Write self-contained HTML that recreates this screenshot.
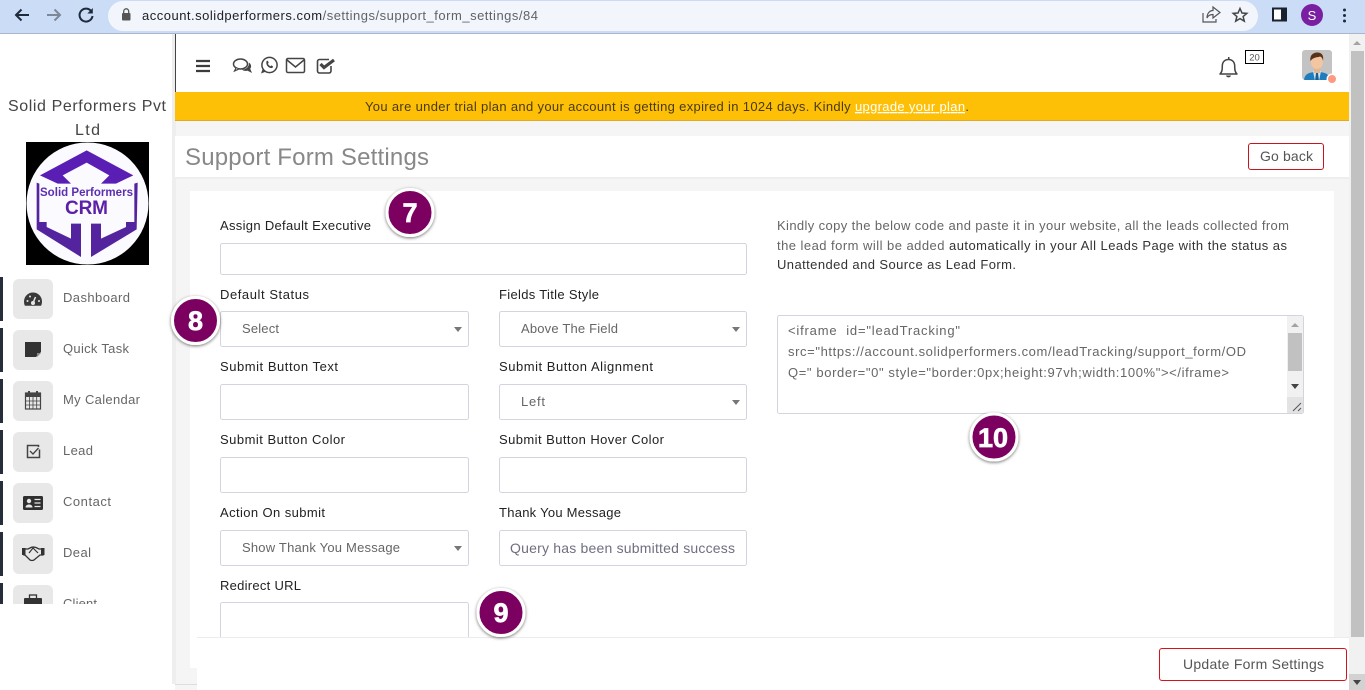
<!DOCTYPE html>
<html><head><meta charset="utf-8"><title>Support Form Settings</title>
<style>
html,body{margin:0;padding:0;width:1365px;height:690px;overflow:hidden;background:#fff}
svg{display:block}
text{font-family:"Liberation Sans",sans-serif;white-space:pre}
.l{font-size:13px;fill:#222}
.s{font-size:13px;fill:#666}
.n{font-size:13px;fill:#666}
.b{fill:#fff;stroke:#d4d4e0;stroke-width:1}
.t{fill:#fff;stroke:#fff;stroke-width:.7;font-weight:bold;font-size:27px;text-anchor:middle}
</style></head><body>
<svg width="1365" height="690" viewBox="0 0 1365 690" xmlns="http://www.w3.org/2000/svg">
<defs>
<filter id="sh" x="-30%" y="-30%" width="160%" height="160%"><feDropShadow dx="0" dy="1" stdDeviation="1.6" flood-color="#000" flood-opacity=".55"/></filter>
<clipPath id="side"><rect x="0" y="270" width="172" height="334"/></clipPath>
<clipPath id="av"><rect x="1302" y="50" width="30" height="30" rx="3"/></clipPath>
</defs>

<!-- page backgrounds -->
<rect x="0" y="34" width="1365" height="656" fill="#fff"/>
<rect x="175" y="120" width="1175" height="570" fill="#f5f5f5"/>
<rect x="172" y="34" width="4" height="650" fill="#eee"/>
<rect x="175" y="34" width="1175" height="58" fill="#fff"/>
<rect x="175" y="34" width="1" height="58" fill="#444"/>

<!-- browser chrome -->
<rect x="0" y="0" width="1365" height="33" fill="#cbdcf6"/>
<rect x="0" y="33" width="1365" height="1" fill="#a9b6cb"/>
<rect x="108" y="1" width="1150" height="30" rx="15" fill="#f2f6fc"/>
<path d="M29 15H16M21.500 9.500 16 15l5.500 5.500" fill="none" stroke="#1f2b3a" stroke-width="2"/>
<path d="M47 15H60M54.500 9.500 60 15l-5.500 5.500" fill="none" stroke="#7d8798" stroke-width="2"/>
<path d="M91.500 11.500A6.500 6.500 0 1 0 92.500 16" fill="none" stroke="#1f2b3a" stroke-width="2"/>
<path d="M92.800 8v5.500h-5.500z" fill="#1f2b3a"/>
<rect x="122" y="13" width="8.500" height="7.500" rx="1" fill="#555"/>
<path d="M123.700 13v-1.700a2.500 2.500 0 0 1 5 0V13" fill="none" stroke="#555" stroke-width="1.300"/>
<text x="142" y="20" font-size="13" fill="#5f6368" textLength="396" lengthAdjust="spacing"><tspan fill="#202124">account.solidperformers.com</tspan>/settings/support_form_settings/84</text>
<path d="M1203 13v9h13v-3M1207 18c0-5 3-7.500 6-7.500V7l7 5.500-7 5.500v-3.500c-3 0-5 1-6 3.500z" fill="none" stroke="#555" stroke-width="1.200"/>
<path d="m1240 8.500 2 4.500 4.800.4-3.700 3.100 1.200 4.700-4.300-2.600-4.300 2.600 1.200-4.700-3.700-3.100 4.800-.4z" fill="none" stroke="#444" stroke-width="1.500"/>
<rect x="1273" y="8.500" width="13" height="12" fill="#fff" stroke="#1a2230" stroke-width="2"/>
<rect x="1281" y="8.500" width="6" height="12" fill="#1a2230"/>
<circle cx="1312" cy="15" r="11" fill="#7b1fa2"/>
<text x="1312" y="20" font-size="13" fill="#fff" text-anchor="middle">S</text>
<circle cx="1344.500" cy="10" r="1.500" fill="#1f2b3a"/><circle cx="1344.500" cy="15.500" r="1.500" fill="#1f2b3a"/><circle cx="1344.500" cy="21" r="1.500" fill="#1f2b3a"/>

<!-- top nav icons -->
<path d="M196 61h14M196 66h14M196 71h14" stroke="#3c3c3c" stroke-width="2.200"/>
<ellipse cx="240.500" cy="64" rx="7" ry="5" fill="#fff" stroke="#444" stroke-width="1.500"/>
<path d="M236 68l-1.500 3 4-1.800" fill="#fff" stroke="#444" stroke-width="1.200"/>
<path d="M248.800 62.500c2.500 1.500 3 4.300 1.400 6.300l1.800 4.200-4.600-2.400c-2 .6-4 .2-5.400-1 3.500.2 7.400-2.400 6.800-7.100z" fill="#444"/>
<circle cx="269.500" cy="65" r="7.600" fill="none" stroke="#444" stroke-width="1.500"/>
<path d="M261 73.500l1.900-5.300 3.300 3.300z" fill="#444"/>
<path d="M266.300 61.500c.5-1 1.600-1 1.900 0l.5 1.400-.8.9c.5 1.100 1.300 1.900 2.500 2.400l.9-.8 1.400.7c.7.6 0 1.900-1.300 2-3.200 0-5.900-3.800-4.900-6.600z" fill="#444"/>
<rect x="286.500" y="58.500" width="18" height="14" rx="1.500" fill="none" stroke="#444" stroke-width="1.500"/>
<path d="m287 60 8.500 7 8.500-7" fill="none" stroke="#444" stroke-width="1.500"/>
<path d="M331 66v5a2 2 0 0 1-2 2h-9.500a2 2 0 0 1-2-2v-9.500a2 2 0 0 1 2-2h9.500" fill="none" stroke="#444" stroke-width="1.600"/>
<path d="m320.500 64 3.500 3.500L334 60" fill="none" stroke="#444" stroke-width="3.200"/>

<!-- bell + count -->
<path d="M1220 74c2-2 2.300-4 2.300-8 0-4 2.500-6.500 6.200-6.500s6.200 2.500 6.200 6.500c0 4 .3 6 2.300 8z" fill="none" stroke="#444" stroke-width="1.500" stroke-linejoin="round"/>
<path d="M1226 75.500a2.600 2.600 0 0 0 5 0z" fill="#444"/>
<rect x="1228" y="57" width="1.500" height="2.500" fill="#444"/>
<rect x="1245.500" y="50.500" width="18" height="13" fill="#fff" stroke="#000"/>
<text x="1254.500" y="60.500" font-size="9.500" fill="#555" text-anchor="middle">20</text>

<!-- avatar -->
<rect x="1302" y="50" width="30" height="30" rx="3" fill="#c3c3c3"/>
<g clip-path="url(#av)">
<path d="M1304 81c0-7 5-9 13-9s13 2 13 9z" fill="#1f7dbd"/>
<path d="M1313 71h8l-2 10h-4z" fill="#cfe6f2"/>
<path d="M1316 73h2l1 8h-4z" fill="#175f95"/>
<rect x="1314" y="66" width="6" height="7" fill="#e8b48f"/>
<ellipse cx="1317" cy="62" rx="6" ry="7" fill="#f3c6a2"/>
<path d="M1310.500 61c-1-6 3-8.500 7-8.500s6.500 2.500 5.500 8.500c-.5-3-1.500-4-3-4.500-2.500 1-7 .5-9.500 4.500z" fill="#5a3218"/>
</g>
<circle cx="1332" cy="79" r="5.500" fill="#fff"/><circle cx="1332" cy="79" r="4" fill="#ff9a80"/>

<!-- banner -->
<rect x="175" y="92" width="1174" height="28" fill="#fdc006"/>
<rect x="175" y="120" width="1174" height="1" fill="#e0a92a"/>
<text x="365" y="111" font-size="13" fill="#4a3a10" textLength="604" lengthAdjust="spacing">You are under trial plan and your account is getting expired in 1024 days. Kindly <tspan fill="#fff" text-decoration="underline">upgrade your plan</tspan>.</text>

<!-- title bar -->
<rect x="175" y="136" width="1174" height="41" fill="#fff"/>
<rect x="175" y="177" width="1174" height="2" fill="#eee"/>
<text x="185" y="165" font-size="24" fill="#888" textLength="244" lengthAdjust="spacing">Support Form Settings</text>
<rect x="1248.500" y="143.500" width="75" height="26" rx="2.500" fill="#fff" stroke="#c8141c"/>
<text x="1260" y="161" font-size="14" fill="#555" textLength="53" lengthAdjust="spacing">Go back</text>

<!-- card -->
<rect x="190" y="191" width="1144" height="477" fill="#fff"/>
<text class="l" x="220" y="230" textLength="151" lengthAdjust="spacing">Assign Default Executive</text>
<rect class="b" x="220.500" y="243.500" width="526" height="31" rx="2"/>
<text class="l" x="220" y="299" textLength="89" lengthAdjust="spacing">Default Status</text>
<text class="l" x="499" y="299" textLength="100" lengthAdjust="spacing">Fields Title Style</text>
<rect class="b" x="220.500" y="311.500" width="248" height="35" rx="2"/>
<rect class="b" x="499.500" y="311.500" width="247" height="35" rx="2"/>
<text class="s" x="242" y="333" textLength="37" lengthAdjust="spacing">Select</text>
<text class="s" x="521" y="333" textLength="97" lengthAdjust="spacing">Above The Field</text>
<path d="M454 327h8l-4 5zM732 327h8l-4 5z" fill="#777"/>
<text class="l" x="220" y="371" textLength="118" lengthAdjust="spacing">Submit Button Text</text>
<text class="l" x="499" y="371" textLength="154" lengthAdjust="spacing">Submit Button Alignment</text>
<rect class="b" x="220.500" y="384.500" width="248" height="35" rx="2"/>
<rect class="b" x="499.500" y="384.500" width="247" height="35" rx="2"/>
<text class="s" x="521" y="406" textLength="24" lengthAdjust="spacing">Left</text>
<path d="M732 400h8l-4 5z" fill="#777"/>
<text class="l" x="220" y="444" textLength="125" lengthAdjust="spacing">Submit Button Color</text>
<text class="l" x="499" y="444" textLength="165" lengthAdjust="spacing">Submit Button Hover Color</text>
<rect class="b" x="220.500" y="457.500" width="248" height="35" rx="2"/>
<rect class="b" x="499.500" y="457.500" width="247" height="35" rx="2"/>
<text class="l" x="220" y="517" textLength="105" lengthAdjust="spacing">Action On submit</text>
<text class="l" x="499" y="517" textLength="122" lengthAdjust="spacing">Thank You Message</text>
<rect class="b" x="220.500" y="530.500" width="248" height="35" rx="2"/>
<rect class="b" x="499.500" y="530.500" width="247" height="35" rx="2"/>
<text class="s" x="242" y="552" textLength="158" lengthAdjust="spacing">Show Thank You Message</text>
<path d="M454 546h8l-4 5z" fill="#777"/>
<text x="510" y="553" font-size="14" fill="#6f6f80" textLength="225" lengthAdjust="spacing">Query has been submitted success</text>
<text class="l" x="220" y="590" textLength="81" lengthAdjust="spacing">Redirect URL</text>
<rect class="b" x="220.500" y="602.500" width="248" height="50" rx="2"/>

<!-- right column -->
<text class="n" x="777" y="230" textLength="512" lengthAdjust="spacing">Kindly copy the below code and paste it in your website, all the leads collected from</text>
<text class="n" x="777" y="250" textLength="510" lengthAdjust="spacing">the lead form will be added <tspan fill="#333">automatically in your All Leads Page with the status as</tspan></text>
<text x="777" y="269" font-size="13" fill="#333" textLength="239" lengthAdjust="spacing">Unattended and Source as Lead Form.</text>
<rect class="b" x="777.500" y="315.500" width="526" height="98" rx="2"/>
<text class="s" x="788" y="335" textLength="172" lengthAdjust="spacing">&lt;iframe  id="leadTracking"</text>
<text class="s" x="788" y="356" textLength="458" lengthAdjust="spacing">src="https://account.solidperformers.com/leadTracking/support_form/OD</text>
<text class="s" x="788" y="377" textLength="441" lengthAdjust="spacing">Q=" border="0" style="border:0px;height:97vh;width:100%"&gt;&lt;/iframe&gt;</text>
<rect x="1287" y="316" width="16" height="97" fill="#f1f1f1"/>
<rect x="1288" y="333" width="14" height="38" fill="#c1c1c1"/>
<path d="M1291 327h8l-4-4z" fill="#a3a3a3"/>
<path d="M1291 384h8l-4 5z" fill="#444"/>
<rect x="1287" y="397" width="16" height="16" fill="#e3e3e3"/>
<path d="M1293 411l8-8M1298 411l3-3" stroke="#555" stroke-width="1"/>

<!-- bottom bar -->
<rect x="197" y="638" width="1152" height="52" fill="#fff"/>
<rect x="197" y="637" width="1152" height="1" fill="#ececec"/>
<rect x="175" y="684" width="22" height="1" fill="#ddd"/>
<rect x="1159.500" y="648.500" width="187" height="32" rx="2.500" fill="#fff" stroke="#d8121c"/>
<text x="1183" y="669" font-size="14" fill="#555" textLength="141" lengthAdjust="spacing">Update Form Settings</text>

<!-- page scrollbar -->
<rect x="1349" y="34" width="16" height="656" fill="#f1f1f1"/>
<rect x="1351" y="51" width="13" height="586" fill="#c1c1c1"/>
<path d="M1353 45h8l-4-4z" fill="#a3a3a3"/>
<rect x="1349" y="674" width="16" height="16" fill="#d2d2d2"/>
<path d="M1353 680h8l-4 5z" fill="#444"/>

<!-- sidebar -->
<text x="8" y="111" font-size="16" fill="#444" textLength="158" lengthAdjust="spacing">Solid Performers Pvt</text>
<text x="75" y="135" font-size="16" fill="#444" textLength="25" lengthAdjust="spacing">Ltd</text>
<rect x="26" y="142" width="123" height="123" fill="#000"/>
<circle cx="87.500" cy="203.500" r="61" fill="#fbfaff"/>
<g transform="translate(26 142) scale(.33333)">
<path d="M182 25 322 100 270 125H225L250 100 182 62 110 100 135 125H95L42 100z" fill="#5a1eb4"/>
<path d="M32 122 40 125V240H62V255L135 290V245H165V345L32 262z" fill="#54249f"/>
<path d="M335 122 325 125V240H300V255L225 290V245H195V345L332 262z" fill="#54249f"/>
</g>
<text x="40" y="196" font-size="11.500" font-weight="bold" fill="#5b2fb0" textLength="93" lengthAdjust="spacing">Solid Performers</text>
<text x="65" y="214" font-size="19" font-weight="bold" fill="#5b1fa8" textLength="43" lengthAdjust="spacing">CRM</text>

<g clip-path="url(#side)">
<g fill="#262e3c">
<rect x="0" y="277" width="3" height="44"/><rect x="0" y="328" width="3" height="44"/><rect x="0" y="379" width="3" height="44"/><rect x="0" y="430" width="3" height="44"/><rect x="0" y="481" width="3" height="44"/><rect x="0" y="532" width="3" height="44"/><rect x="0" y="583" width="3" height="44"/>
</g>
<g fill="#e8e8e8">
<rect x="13" y="279" width="40" height="40" rx="6"/><rect x="13" y="330" width="40" height="40" rx="6"/><rect x="13" y="381" width="40" height="40" rx="6"/><rect x="13" y="432" width="40" height="40" rx="6"/><rect x="13" y="483" width="40" height="40" rx="6"/><rect x="13" y="534" width="40" height="40" rx="6"/><rect x="13" y="585" width="40" height="40" rx="6"/>
</g>
<g font-size="13" fill="#666">
<text x="63" y="302" font-size="13" textLength="67" lengthAdjust="spacing">Dashboard</text>
<text x="63" y="353" font-size="13" textLength="66" lengthAdjust="spacing">Quick Task</text>
<text x="63" y="404" font-size="13" textLength="77" lengthAdjust="spacing">My Calendar</text>
<text x="63" y="455" font-size="13" textLength="30" lengthAdjust="spacing">Lead</text>
<text x="63" y="506" font-size="13" textLength="48" lengthAdjust="spacing">Contact</text>
<text x="63" y="557" font-size="13" textLength="28" lengthAdjust="spacing">Deal</text>
<text x="63" y="608" font-size="13" textLength="34" lengthAdjust="spacing">Client</text>
</g>
<!-- dashboard -->
<path d="M24 301.500a9 9 0 1 1 18 0c0 1.500-.3 3-.9 4.300H24.900c-.6-1.300-.9-2.800-.9-4.300z" fill="#3a3a3a"/>
<circle cx="33" cy="303" r="2" fill="#e8e8e8"/><path d="M33 303l2.500-6" stroke="#e8e8e8" stroke-width="1.500"/>
<circle cx="27.500" cy="301" r="1" fill="#e8e8e8"/><circle cx="30" cy="296.500" r="1" fill="#e8e8e8"/><circle cx="39" cy="301" r="1" fill="#e8e8e8"/>
<!-- quick task -->
<path d="M25 342h16v10l-5 5H25z" fill="#333"/><path d="M37 357v-4h4z" fill="#888"/>
<!-- calendar -->
<rect x="25.500" y="393" width="15" height="16" fill="none" stroke="#444" stroke-width="1.200"/>
<rect x="25" y="393" width="16" height="4" fill="#444"/>
<rect x="28" y="391" width="2" height="4" fill="#444"/><rect x="36" y="391" width="2" height="4" fill="#444"/>
<path d="M25.500 401h15M25.500 405h15M29.500 397v12M33 397v12M36.700 397v12" stroke="#444" stroke-width=".8"/>
<!-- lead -->
<path d="M38.500 447v-1.500h-11v12h12v-8" fill="none" stroke="#444" stroke-width="1.500"/>
<path d="M30 451l3 3 5.500-6" fill="none" stroke="#444" stroke-width="1.300"/>
<!-- contact -->
<rect x="23" y="496" width="20" height="14" rx="1.500" fill="#2f2f2f"/>
<circle cx="29" cy="501" r="2.200" fill="#e8e8e8"/><path d="M25.500 507.500c0-4 7-4 7 0z" fill="#e8e8e8"/>
<path d="M34.500 499.500h6M34.500 503h6M34.500 506.500h6" stroke="#e8e8e8" stroke-width="1.200"/>
<!-- deal -->
<path d="M24 549l4 0 3-1.500c1.500-.8 3-.5 5 0l3 1.500 4 0v6h-3l-6 5c-2 1-3 .5-4 0l-5-5h-1z" fill="none" stroke="#333" stroke-width="1.300"/>
<rect x="22" y="548" width="3.500" height="7" fill="#333"/><rect x="41" y="548" width="3.500" height="7" fill="#333"/>
<path d="M29 553l4-5 5 5" fill="none" stroke="#333" stroke-width="1.200"/>
<!-- client -->
<rect x="24" y="598" width="18" height="14" rx="1" fill="#333"/>
<rect x="29.500" y="595" width="7" height="4" fill="none" stroke="#333" stroke-width="1.300"/>
</g>

<!-- annotation badges -->
<g>
<circle cx="410" cy="212.500" r="23" fill="#7b0060" stroke="#fff" stroke-width="3" filter="url(#sh)"/>
<text class="t" x="410" y="222">7</text>
<circle cx="195.500" cy="320.500" r="23" fill="#7b0060" stroke="#fff" stroke-width="3" filter="url(#sh)"/>
<text class="t" x="195.500" y="330">8</text>
<circle cx="501" cy="612.500" r="23" fill="#7b0060" stroke="#fff" stroke-width="3" filter="url(#sh)"/>
<text class="t" x="501" y="622">9</text>
<circle cx="994" cy="437" r="23" fill="#7b0060" stroke="#fff" stroke-width="3" filter="url(#sh)"/>
<text class="t" x="993" y="447">10</text>
</g>
</svg>
</body></html>
